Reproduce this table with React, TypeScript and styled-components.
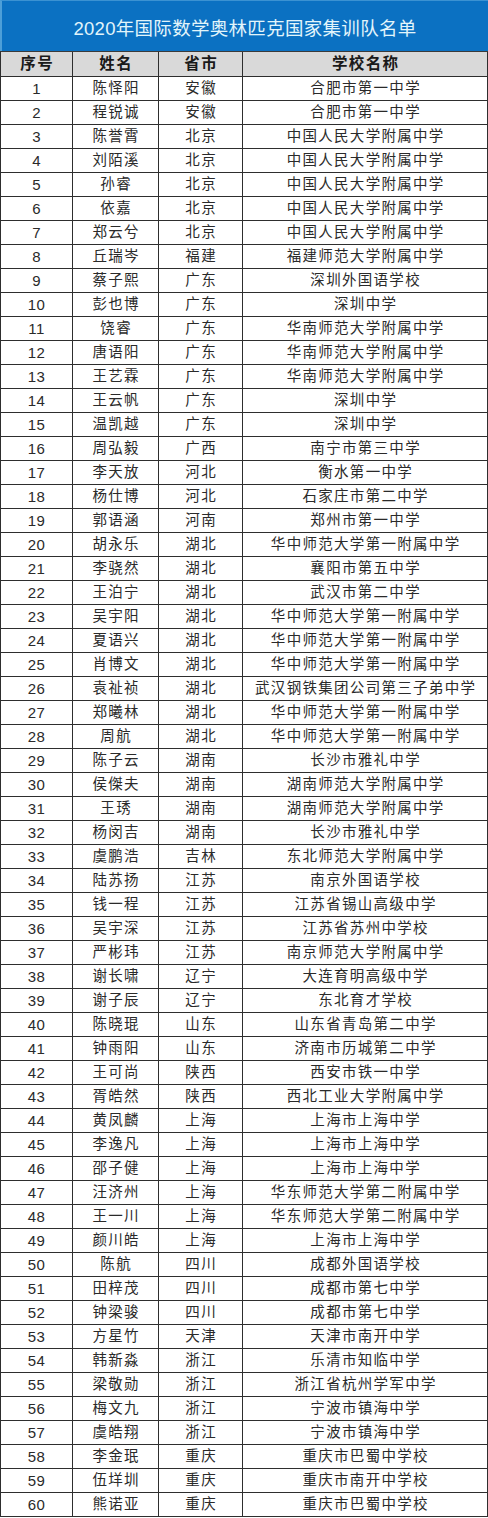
import * as React from "react";
import styled, { createGlobalStyle } from "styled-components";

const GlobalStyle = createGlobalStyle`
  html, body {
    margin: 0;
    padding: 0;
    background: #ffffff;
  }
`;

// 序号 姓名 省市 学校名称
const rawRows = `陈怿阳 安徽 合肥市第一中学
程锐诚 安徽 合肥市第一中学
陈誉霄 北京 中国人民大学附属中学
刘陌溪 北京 中国人民大学附属中学
孙睿 北京 中国人民大学附属中学
依嘉 北京 中国人民大学附属中学
郑云兮 北京 中国人民大学附属中学
丘瑞岑 福建 福建师范大学附属中学
蔡子熙 广东 深圳外国语学校
彭也博 广东 深圳中学
饶睿 广东 华南师范大学附属中学
唐语阳 广东 华南师范大学附属中学
王艺霖 广东 华南师范大学附属中学
王云帆 广东 深圳中学
温凯越 广东 深圳中学
周弘毅 广西 南宁市第三中学
李天放 河北 衡水第一中学
杨仕博 河北 石家庄市第二中学
郭语涵 河南 郑州市第一中学
胡永乐 湖北 华中师范大学第一附属中学
李骁然 湖北 襄阳市第五中学
王泊宁 湖北 武汉市第二中学
吴宇阳 湖北 华中师范大学第一附属中学
夏语兴 湖北 华中师范大学第一附属中学
肖博文 湖北 华中师范大学第一附属中学
袁祉祯 湖北 武汉钢铁集团公司第三子弟中学
郑曦林 湖北 华中师范大学第一附属中学
周航 湖北 华中师范大学第一附属中学
陈子云 湖南 长沙市雅礼中学
侯傑夫 湖南 湖南师范大学附属中学
王琇 湖南 湖南师范大学附属中学
杨闵吉 湖南 长沙市雅礼中学
虞鹏浩 吉林 东北师范大学附属中学
陆苏扬 江苏 南京外国语学校
钱一程 江苏 江苏省锡山高级中学
吴宇深 江苏 江苏省苏州中学校
严彬玮 江苏 南京师范大学附属中学
谢长啸 辽宁 大连育明高级中学
谢子辰 辽宁 东北育才学校
陈晓琨 山东 山东省青岛第二中学
钟雨阳 山东 济南市历城第二中学
王可尚 陕西 西安市铁一中学
胥皓然 陕西 西北工业大学附属中学
黄凤麟 上海 上海市上海中学
李逸凡 上海 上海市上海中学
邵子健 上海 上海市上海中学
汪济州 上海 华东师范大学第二附属中学
王一川 上海 华东师范大学第二附属中学
颜川皓 上海 上海市上海中学
陈航 四川 成都外国语学校
田梓茂 四川 成都市第七中学
钟梁骏 四川 成都市第七中学
方星竹 天津 天津市南开中学
韩新淼 浙江 乐清市知临中学
梁敬勋 浙江 浙江省杭州学军中学
梅文九 浙江 宁波市镇海中学
虞皓翔 浙江 宁波市镇海中学
李金珉 重庆 重庆市巴蜀中学校
伍垟圳 重庆 重庆市南开中学校
熊诺亚 重庆 重庆市巴蜀中学校`;

interface Member {
  no: number;
  name: string;
  province: string;
  school: string;
}

const members: Member[] = rawRows.split("\n").map((line, i) => {
  const [name, province, school] = line.trim().split(" ");
  return { no: i + 1, name, province, school };
});

const FONT = `"Liberation Sans", "Noto Sans CJK SC", sans-serif`;

const Page = styled.div`
  width: 488px;
  font-family: ${FONT};
`;

const TitleBar = styled.div`
  height: 51px;
  box-sizing: border-box;
  display: flex;
  align-items: center;
  justify-content: center;
  background: #0b71c2;
  border-left: 2px solid #4d9fd8;
  border-top: 1px solid #3b92d2;
  color: #e2f5fb;
  font-size: 18.5px;
  letter-spacing: 0.3px;
  padding-top: 2px;
`;

const Grid = styled.div`
  display: grid;
  grid-template-columns: 72px 86px 84px 1fr;
  border-left: 1px solid #2e2e2e;
  border-top: 1px solid #3a3a3a;
`;

const Cell = styled.div<{ $head?: boolean; $num?: boolean }>`
  box-sizing: border-box;
  height: ${(p) => (p.$head ? "25px" : "24px")};
  display: flex;
  align-items: center;
  justify-content: center;
  border-right: 1px solid #2e2e2e;
  border-bottom: 1px solid #2e2e2e;
  background: ${(p) => (p.$head ? "#d9d9d9" : "#ffffff")};
  color: ${(p) => (p.$head ? "#1a1a1a" : "#2a2a2a")};
  font-size: ${(p) => (p.$head ? "15.5px" : p.$num ? "15px" : "14.5px")};
  font-weight: ${(p) => (p.$head ? 700 : 400)};
  letter-spacing: ${(p) => (p.$num ? "0.4px" : "1.3px")};
  line-height: 1;
  white-space: nowrap;
  padding-left: ${(p) => (p.$num ? "0" : "1.3px")};
`;

export default function App() {
  return (
    <>
      <GlobalStyle />
      <Page>
        <TitleBar>2020年国际数学奥林匹克国家集训队名单</TitleBar>
        <Grid>
          <Cell $head>序号</Cell>
          <Cell $head>姓名</Cell>
          <Cell $head>省市</Cell>
          <Cell $head>学校名称</Cell>
          {members.map((m) => (
            <React.Fragment key={m.no}>
              <Cell $num>{m.no}</Cell>
              <Cell>{m.name}</Cell>
              <Cell>{m.province}</Cell>
              <Cell>{m.school}</Cell>
            </React.Fragment>
          ))}
        </Grid>
      </Page>
    </>
  );
}
